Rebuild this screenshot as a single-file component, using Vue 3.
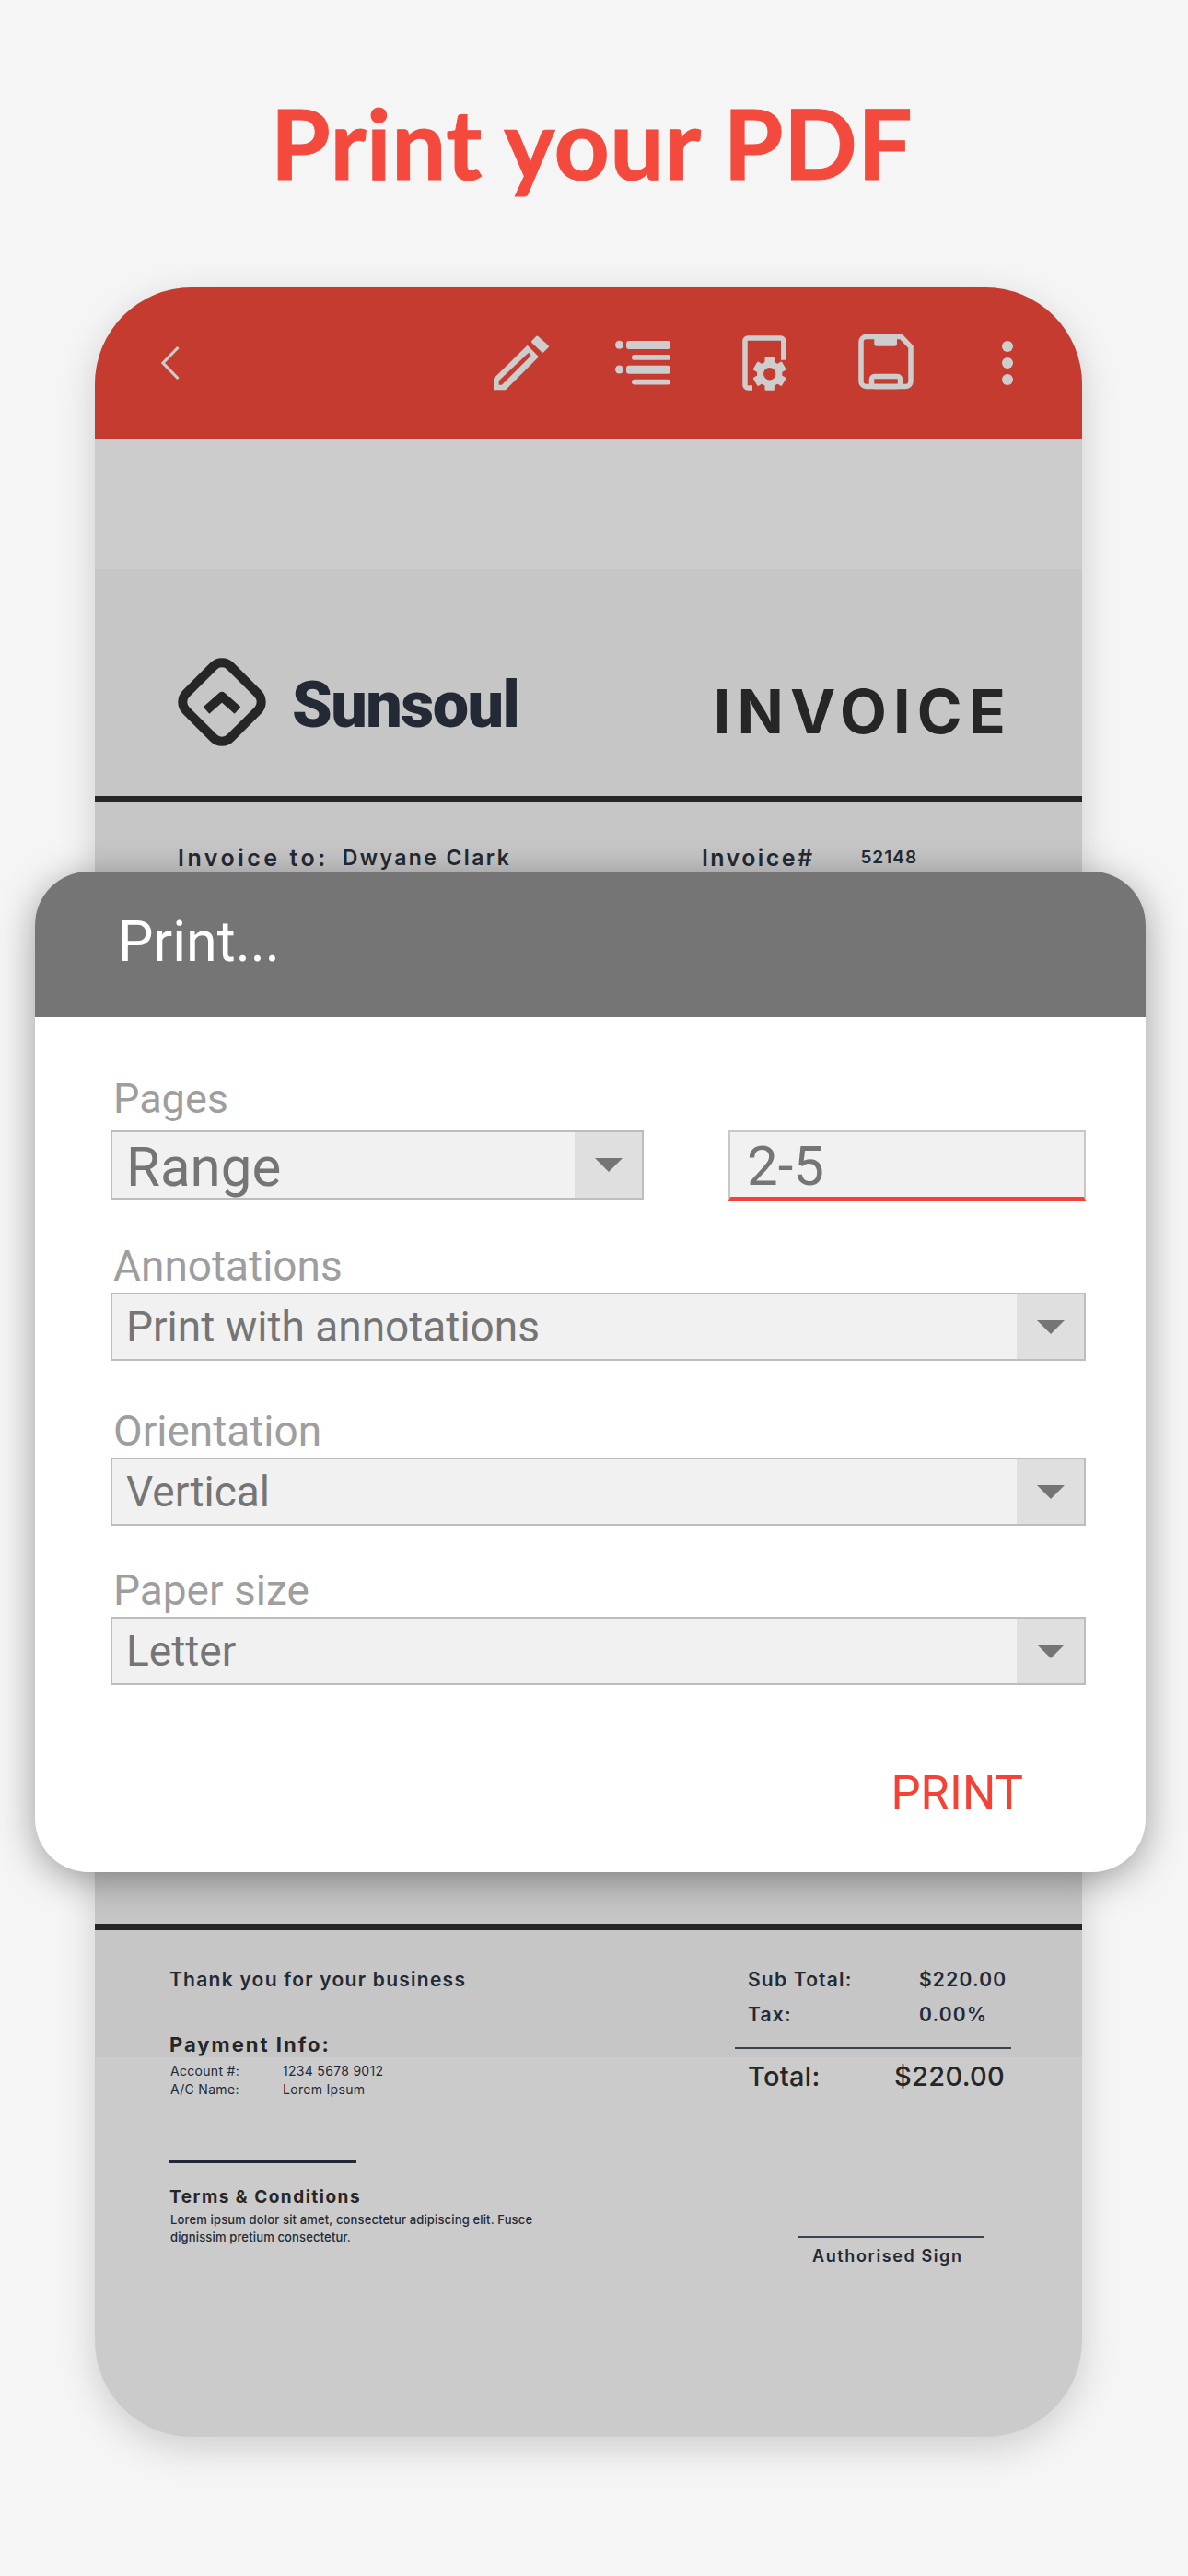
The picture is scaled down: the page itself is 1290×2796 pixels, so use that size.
<script setup>
const gearTeeth = [0, 60, 120, 180, 240, 300]
const selects = [
  { label: 'Annotations', value: 'Print with annotations', cls: 'f-annot' },
  { label: 'Orientation', value: 'Vertical', cls: 'f-orient' },
  { label: 'Paper size', value: 'Letter', cls: 'f-paper' }
]
</script>

<template>
  <div class="page">
    <h1 class="title">Print your PDF</h1>

    <div class="phone">
      <div class="appbar">
        <svg class="back" width="20" height="60" viewBox="0 0 20 60">
          <path d="M18.5 13 L2 30 L18.5 47" fill="none" stroke="#cdcdcd" stroke-width="3.2" />
        </svg>
        <svg class="icon" viewBox="0 0 60 60">
          <path fill-rule="evenodd" d="M0 46.7 L36.7 10.7 L49 23.3 L13 59.3 H0 Z M5.7 49.3 V53.7 H9 L40.7 22 L38 18.7 Z" />
          <path d="M42.5 7 L47.3 2 L58.5 12 L53.3 17.2 Z" stroke="#cdcdcd" stroke-width="3" stroke-linejoin="round" />
        </svg>
        <svg class="icon" viewBox="0 0 60 60">
          <circle cx="4.5" cy="10.3" r="4.5" />
          <rect x="12" y="6" width="48" height="9" rx="3" />
          <rect x="18" y="21" width="42" height="5.8" rx="2.9" />
          <circle cx="4.5" cy="37" r="4.5" />
          <rect x="12" y="32.7" width="48" height="9" rx="3" />
          <rect x="18" y="47.7" width="42" height="5.8" rx="2.9" />
        </svg>
        <svg class="icon" viewBox="0 0 60 60">
          <path d="M50.8 26.7 V6 a3 3 0 0 0 -3 -3 H12 a3 3 0 0 0 -3 3 V54 a3 3 0 0 0 3 3 H17" fill="none" stroke="#cdcdcd" stroke-width="5.5" />
          <circle cx="35.7" cy="41.7" r="10.2" fill="none" stroke="#cdcdcd" stroke-width="7" />
          <rect v-for="a in gearTeeth" :key="a" x="30.5" y="23.7" width="10.4" height="8" rx="1" :transform="`rotate(${a} 35.7 41.7)`" />
        </svg>
        <svg class="icon" viewBox="0 0 60 60">
          <path d="M8.5 1.5 H46.5 L57 12.5 V50 a5.5 5.5 0 0 1 -5.5 5.5 H8.5 a5.5 5.5 0 0 1 -5.5 -5.5 V7 a5.5 5.5 0 0 1 5.5 -5.5 Z" fill="none" stroke="#cdcdcd" stroke-width="5.5" stroke-linejoin="round" />
          <path d="M17.3 2 H42 V9 a2.7 2.7 0 0 1 -2.7 2.7 H20 a2.7 2.7 0 0 1 -2.7 -2.7 Z" />
          <rect x="14.5" y="44.5" width="31" height="11" rx="3" fill="none" stroke="#cdcdcd" stroke-width="5.5" />
        </svg>
        <svg class="icon" viewBox="0 0 60 60">
          <circle cx="30" cy="12" r="6" />
          <circle cx="30" cy="30" r="6" />
          <circle cx="30" cy="48" r="6" />
        </svg>
      </div>

      <div class="band"></div>

      <div class="doc">
        <div class="doc-head">
          <div class="brand">
            <svg width="100" height="100" viewBox="0 0 100 100">
              <rect x="16" y="16" width="68" height="68" rx="13" transform="rotate(45 50 50)" fill="none" stroke="#262626" stroke-width="10" />
              <path d="M33 59 L50 44 L67 59" fill="none" stroke="#262626" stroke-width="10" stroke-linejoin="round" />
            </svg>
            <span class="brand-name">Sunsoul</span>
          </div>
          <span class="invoice-word">INVOICE</span>
        </div>
        <div class="rule"></div>
        <div class="doc-meta">
          <div class="meta-left">
            <span class="meta-key">Invoice to:</span>
            <span class="meta-name">Dwyane Clark</span>
          </div>
          <div class="meta-right">
            <span class="meta-key meta-key-num">Invoice#</span>
            <span class="meta-num">52148</span>
          </div>
        </div>
        <div class="rule rule-low"></div>
        <div class="doc-foot">
          <div class="foot-left">
            <div class="thanks">Thank you for your business</div>
            <div class="pay-title">Payment Info:</div>
            <div class="pay-row"><span>Account #:</span><span>1234 5678 9012</span></div>
            <div class="pay-row"><span>A/C Name:</span><span>Lorem Ipsum</span></div>
          </div>
          <div class="foot-right">
            <div class="sum-row"><span>Sub Total:</span><span>$220.00</span></div>
            <div class="sum-row"><span>Tax:</span><span>0.00%</span></div>
            <div class="sum-line"></div>
            <div class="total-row"><span>Total:</span><span>$220.00</span></div>
          </div>
        </div>
      </div>

      <div class="doc-end">
        <div class="terms">
          <div class="short-line"></div>
          <div class="terms-title">Terms &amp; Conditions</div>
          <p class="terms-text">Lorem ipsum dolor sit amet, consectetur adipiscing elit. Fusce<br />dignissim pretium consectetur.</p>
        </div>
        <div class="sign">
          <div class="sign-line"></div>
          <div class="sign-name">Authorised Sign</div>
        </div>
      </div>
    </div>

    <div class="dialog">
      <div class="dialog-head">Print...</div>
      <div class="dialog-body">
        <div class="label l-pages">Pages</div>
        <div class="pages-row">
          <div class="select select-range">
            <span class="sel-value big">Range</span>
            <span class="sel-arrow"><i></i></span>
          </div>
          <div class="range-input">2-5</div>
        </div>
        <div v-for="s in selects" :key="s.label" :class="['field', s.cls]">
          <div class="label">{{ s.label }}</div>
          <div class="select">
            <span class="sel-value">{{ s.value }}</span>
            <span class="sel-arrow"><i></i></span>
          </div>
        </div>
        <div class="actions"><span class="print-btn">PRINT</span></div>
      </div>
    </div>
  </div>
</template>

<style>
html, body {
  margin: 0;
  background: #f5f5f5;
}
</style>

<style scoped>
.page {
  position: relative;
  width: 1290px;
  height: 2796px;
  overflow: hidden;
  background: #f5f5f5;
  font-family: Roboto, "Liberation Sans", sans-serif;
}
.title {
  margin: 0;
  padding: 95px 5px 0 0;
  height: 312px;
  box-sizing: border-box;
  line-height: 118px;
  text-align: center;
  font-family: Lato, sans-serif;
  font-size: 105px;
  font-weight: 700;
  letter-spacing: 0.5px;
  color: #f44a3d;
  -webkit-text-stroke: 1px #f44a3d;
}
.phone {
  margin-left: 103px;
  width: 1072px;
  height: 2333px;
  border-radius: 105px;
  background: #cbcbcb;
  box-shadow: 0 12px 40px rgba(0, 0, 0, 0.16);
  display: flex;
  flex-direction: column;
}
.appbar {
  flex: 0 0 165px;
  box-sizing: border-box;
  padding: 52px 51px 0 0;
  display: flex;
  gap: 72px;
  background: #c53b30;
  border-radius: 105px 105px 0 0;
}
.back {
  margin-left: 72px;
  margin-right: auto;
}
.icon {
  width: 60px;
  height: 60px;
  fill: #cdcdcd;
  overflow: visible;
}
.band {
  flex: 0 0 141px;
  background: #cccccc;
}
.doc {
  flex: 0 0 1615px;
  min-height: 0;
  background: #c6c6c6;
  color: #242a35;
  font-family: Inter, "Liberation Sans", sans-serif;
  display: flex;
  flex-direction: column;
}
.doc-head {
  flex: 0 0 246px;
  box-sizing: border-box;
  padding: 94px 76px 0 88px;
  display: flex;
  justify-content: space-between;
  align-items: flex-start;
}
.brand {
  display: flex;
  align-items: center;
  gap: 26px;
}
.brand-name {
  font-family: Roboto, sans-serif;
  font-size: 70px;
  font-weight: 900;
  line-height: 80px;
  letter-spacing: -1.5px;
  margin-top: 6px;
}
.invoice-word {
  font-size: 66px;
  line-height: 80px;
  font-weight: 700;
  letter-spacing: 7.2px;
  color: #262626;
  margin-top: 20px;
}
.rule {
  flex: 0 0 6px;
  background: #262626;
}
.doc-meta {
  flex: 0 0 1218px;
  box-sizing: border-box;
  padding: 47px 0 0 90px;
  display: flex;
  font-size: 25px;
  line-height: 28px;
  font-weight: 600;
}
.meta-left {
  width: 569px;
  display: flex;
  gap: 15px;
}
.meta-right {
  display: flex;
  gap: 50px;
}
.meta-key {
  letter-spacing: 3.5px;
}
.meta-key-num {
  letter-spacing: 2.4px;
}
.meta-name {
  font-size: 23px;
  letter-spacing: 2.4px;
}
.meta-num {
  font-size: 19px;
  letter-spacing: 1px;
}
.rule-low {
  flex-basis: 7px;
}
.doc-foot {
  flex: 0 0 131px;
  min-height: 0;
  display: flex;
  padding: 42px 0 0 81px;
  box-sizing: border-box;
}
.foot-left {
  width: 614px;
}
.thanks {
  font-size: 21px;
  line-height: 24px;
  font-weight: 600;
  letter-spacing: 1.25px;
}
.pay-title {
  margin-top: 45px;
  font-size: 22px;
  line-height: 26px;
  font-weight: 700;
  letter-spacing: 2px;
  color: #262626;
}
.pay-row {
  display: flex;
  font-size: 14px;
  line-height: 20px;
  font-weight: 400;
  letter-spacing: 0.3px;
}
.pay-title + .pay-row {
  margin-top: 6px;
}
.pay-row span:first-child {
  width: 122px;
  margin-left: 1px;
}
.foot-right {
  width: 300px;
}
.sum-row {
  display: flex;
  padding-left: 14px;
  font-size: 21px;
  line-height: 38px;
  font-weight: 600;
  letter-spacing: 1.2px;
  margin-top: -7px;
}
.sum-row + .sum-row {
  margin-top: 0;
}
.sum-row span:first-child {
  width: 186px;
}
.sum-line {
  height: 2px;
  margin-top: 16px;
  background: #3c424c;
}
.total-row {
  display: flex;
  justify-content: space-between;
  padding: 0 7px 0 14px;
  margin-top: 13px;
  font-size: 29px;
  line-height: 34px;
  font-weight: 500;
  letter-spacing: 0.3px;
  color: #262626;
}
.doc-end {
  flex: 1;
  display: flex;
  justify-content: space-between;
  padding: 112px 106px 0 80px;
  color: #242a35;
  font-family: Inter, "Liberation Sans", sans-serif;
}
.short-line {
  width: 204px;
  height: 3px;
  background: #242a35;
}
.terms-title {
  margin-top: 25px;
  padding-left: 1px;
  font-size: 19px;
  line-height: 24px;
  font-weight: 700;
  letter-spacing: 1.5px;
  color: #262626;
}
.terms-text {
  margin: 3px 0 0;
  font-size: 13px;
  line-height: 19px;
  font-weight: 500;
  letter-spacing: 0.15px;
  padding-left: 2px;
}
.sign {
  margin-top: 82px;
  width: 203px;
}
.sign-line {
  height: 2px;
  background: #3c424c;
}
.sign-name {
  margin-top: 8px;
  padding-left: 16px;
  font-size: 18px;
  line-height: 24px;
  font-weight: 600;
  letter-spacing: 1.6px;
}

.dialog {
  position: absolute;
  left: 38px;
  top: 946px;
  width: 1206px;
  height: 1086px;
  border-radius: 58px;
  background: #fff;
  box-shadow: 0 8px 40px rgba(0, 0, 0, 0.36);
}
.dialog-head {
  height: 158px;
  box-sizing: border-box;
  padding: 46px 0 0 90px;
  background: #757575;
  border-radius: 58px 58px 0 0;
  color: #fff;
  font-size: 61px;
  line-height: 60px;
}
.dialog-body {
  padding: 0 65px 0 82px;
  color: #757575;
}
.label {
  font-size: 46px;
  line-height: 54px;
  color: #9e9e9e;
  padding-left: 3px;
  margin-bottom: 2px;
}
.l-pages {
  margin-top: 62px;
  margin-bottom: 7px;
  font-size: 45px;
}
.select {
  height: 74px;
  box-sizing: border-box;
  border: 2px solid #bdbdbd;
  background: #f1f1f1;
  display: flex;
  align-items: center;
  justify-content: space-between;
}
.sel-value {
  padding-left: 15px;
  font-size: 46px;
  line-height: 70px;
}
.sel-value.big {
  font-size: 60px;
  padding-top: 4px;
}
.sel-arrow {
  width: 73px;
  height: 100%;
  background: #dfdfdf;
  display: flex;
  align-items: center;
  justify-content: center;
}
.sel-arrow i {
  width: 0;
  height: 0;
  border-left: 15px solid transparent;
  border-right: 15px solid transparent;
  border-top: 15px solid #757575;
}
.pages-row {
  display: flex;
  justify-content: space-between;
}
.select-range {
  width: 579px;
  height: 75px;
}
.range-input {
  width: 388px;
  height: 77px;
  box-sizing: border-box;
  border: 2px solid #c8c8c8;
  border-bottom: 5px solid #f44336;
  background: #f1f1f1;
  padding: 2px 0 0 18px;
  font-size: 60px;
  line-height: 70px;
}
.field .select {
  width: 1059px;
}
.f-annot {
  margin-top: 43px;
}
.f-orient {
  margin-top: 49px;
}
.f-paper {
  margin-top: 43px;
}
.actions {
  margin-top: 88px;
  padding-right: 68px;
  text-align: right;
}
.print-btn {
  font-size: 51px;
  line-height: 60px;
  color: #f44336;
}
</style>
